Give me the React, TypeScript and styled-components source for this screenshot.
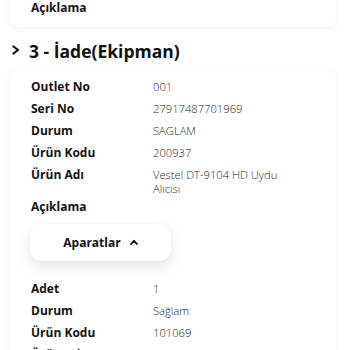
import React from "react";
import styled, { createGlobalStyle } from "styled-components";

const GlobalStyle = createGlobalStyle`
  html, body {
    margin: 0;
    padding: 0;
    background: #ffffff;
    overflow: hidden;
  }
  body {
    font-family: "Open Sans", "Noto Sans", sans-serif;
    color: #111;
  }
`;

type Row = { label: string; value?: string };

const firstItem: Row[] = [
  { label: "Outlet No", value: "001" },
  { label: "Seri No", value: "27917487701969" },
  { label: "Durum", value: "SAGLAM" },
  { label: "Ürün Kodu", value: "200937" },
  { label: "Ürün Adı", value: "Vestel DT-9104 HD Uydu Alıcısı" },
  { label: "Açıklama" },
];

const parts: Row[] = [
  { label: "Adet", value: "1" },
  { label: "Durum", value: "Sağlam" },
  { label: "Ürün Kodu", value: "101069" },
  { label: "Ürün Adı", value: "" },
];

const Page = styled.div`
  width: 350px;
  height: 350px;
  overflow: hidden;
`;

const Card = styled.div<{ $top?: boolean }>`
  margin: ${(p) => (p.$top ? "-7px 14px 0 10px" : "0 14px 0 10px")};
  padding: ${(p) => (p.$top ? "4px 21px 8px" : "6px 21px 0")};
  background: #fff;
  border-radius: 8px;
  box-shadow: 0 1px 6px rgba(0, 0, 0, 0.05);
`;

const SectionTitle = styled.div`
  display: flex;
  align-items: center;
  gap: 9px;
  padding: 9px 0 0 12px;
  height: 30px;
  margin-bottom: 4px;
  font-size: 17.5px;
  font-weight: 700;
  color: #111;
`;

const Chevron = styled.svg`
  width: 8px;
  height: 10px;
  margin-top: -2px;
`;

const InfoRow = styled.div`
  box-sizing: border-box;
  display: grid;
  grid-template-columns: 122px 140px;
  align-items: start;
  min-height: 22px;
  padding-top: 4px;
  line-height: 14px;
`;

const Label = styled.div`
  font-size: 12px;
  font-weight: 700;
  color: #141414;
`;

const Value = styled.div`
  font-size: 11.2px;
  font-weight: 300;
  color: #2a2a2a;
`;

const ToggleButton = styled.button`
  display: flex;
  align-items: center;
  justify-content: center;
  gap: 9px;
  width: 141px;
  height: 37px;
  margin: 6px 0 17px -1px;
  border: none;
  border-radius: 11px;
  background: #fff;
  box-shadow: 0 6px 14px rgba(0, 0, 0, 0.1), 0 0 3px rgba(0, 0, 0, 0.04);
  font-family: inherit;
  font-size: 12px;
  font-weight: 700;
  color: #111;
`;

const Caret = styled.svg`
  width: 8px;
  height: 6px;
  margin-top: -2px;
`;

const Rows: React.FC<{ rows: Row[] }> = ({ rows }) => (
  <>
    {rows.map((r, i) => (
      <InfoRow key={i}>
        <Label>{r.label}</Label>
        <Value>{r.value}</Value>
      </InfoRow>
    ))}
  </>
);

export default function App() {
  return (
    <Page>
      <GlobalStyle />
      <Card $top>
        <InfoRow>
          <Label>Açıklama</Label>
          <Value />
        </InfoRow>
      </Card>
      <SectionTitle>
        <Chevron viewBox="0 0 8 10">
          <path d="M1.5 1.5 L6 5 L1.5 8.5" fill="none" stroke="#111" strokeWidth="2.2" strokeLinecap="round" strokeLinejoin="round" />
        </Chevron>
        3 - İade(Ekipman)
      </SectionTitle>
      <Card>
        <Rows rows={firstItem} />
        <ToggleButton>
          Aparatlar
          <Caret viewBox="0 0 8 6">
            <path d="M1 5 L4 1.8 L7 5" fill="none" stroke="#111" strokeWidth="1.8" strokeLinecap="round" strokeLinejoin="round" />
          </Caret>
        </ToggleButton>
        <Rows rows={parts} />
      </Card>
    </Page>
  );
}
